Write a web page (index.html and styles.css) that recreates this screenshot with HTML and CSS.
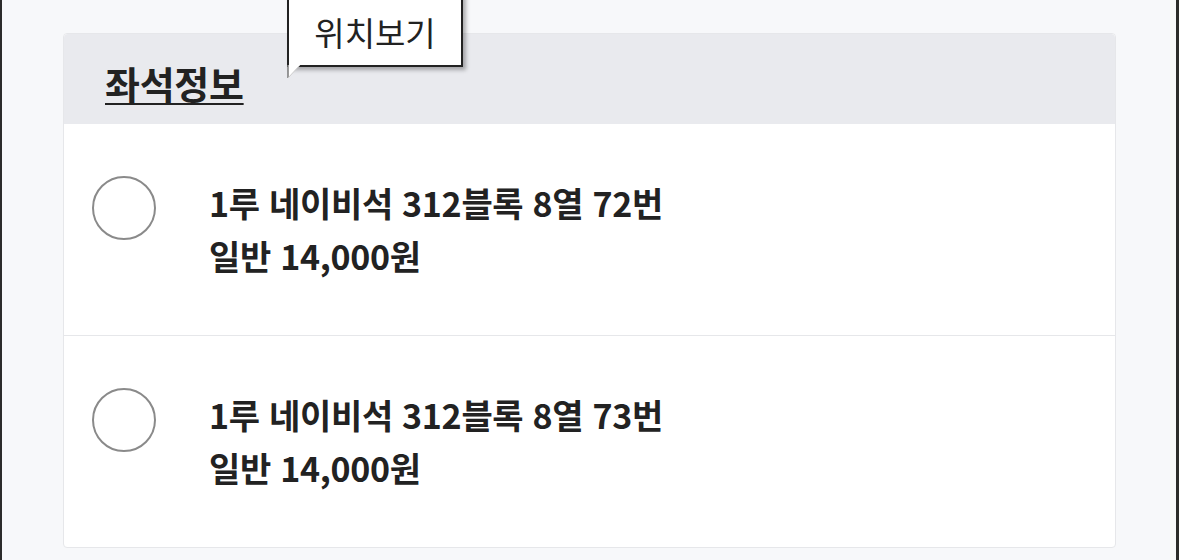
FILE: index.html
```html
<!DOCTYPE html>
<html lang="ko">
<head>
  <meta charset="UTF-8">
  <title>좌석정보</title>
  <link rel="stylesheet" href="styles.css">
</head>
<body>

  <div class="frame">
    <div class="seat-card">

      <!-- 위치보기 말풍선 -->
      <div class="tooltip">
        위치보기
        <svg class="tooltip-tail" width="16" height="15" viewBox="0 0 16 15">
          <path d="M1 0 L1 13 L13 0 Z" fill="#fff"/>
          <path d="M1 0 L1 13" stroke="#777" stroke-width="1.5"/>
          <path d="M1 13 L13 0" stroke="#ccc" stroke-width="1"/>
        </svg>
      </div>

      <div class="seat-header">
        <h2>좌석정보</h2>
      </div>

      <div class="seat-row">
        <span class="radio"></span>
        <div class="seat-text">
          <p>1루 네이비석 312블록 8열 72번</p>
          <p>일반 14,000원</p>
        </div>
      </div>

      <div class="seat-row">
        <span class="radio"></span>
        <div class="seat-text">
          <p>1루 네이비석 312블록 8열 73번</p>
          <p>일반 14,000원</p>
        </div>
      </div>

    </div>
  </div>

</body>
</html>
```

FILE: styles.css
```css
body {
  margin: 0;
  font-family: "Noto Sans CJK KR", "Noto Sans", sans-serif;
  color: #222;
}

.frame {
  background: #f7f8fa;
  border-left: 2px solid #2b2b2b;
  border-right: 3px solid #2b2b2b;
  height: 560px;
  box-sizing: border-box;
  padding: 33px 60px 0 61px;
  overflow: hidden;
}

.seat-card {
  position: relative;
  background: #fff;
  border: 1px solid #e6e7ea;
  border-radius: 4px;
}

.seat-header {
  background: #e9eaee;
  height: 90px;
  padding-left: 41px;
  border-radius: 4px 4px 0 0;
}

.seat-header h2 {
  margin: 0;
  padding-top: 24px;
  font-size: 38px;
  font-weight: 700;
  line-height: 50px;
  letter-spacing: -0.3px;
  text-decoration: underline;
  text-decoration-thickness: 2px;
  text-underline-offset: 4px;
}

/* 말풍선 */
.tooltip {
  position: absolute;
  left: 223px;
  top: -43px;
  width: 176px;
  height: 76px;
  box-sizing: border-box;
  padding-top: 14px;
  text-align: center;
  background: #fff;
  border: 2px solid #222;
  box-shadow: 3px 3px 4px rgba(0, 0, 0, 0.3);
  font-size: 33px;
  line-height: 50px;
  font-weight: 400;
  z-index: 2;
}

.tooltip-tail {
  position: absolute;
  left: -2px;
  bottom: -15px;
}

.seat-row {
  display: flex;
  align-items: flex-start;
  height: 211px;
  padding: 52px 0 0 28px;
  box-sizing: border-box;
}

.seat-row + .seat-row {
  border-top: 1px solid #e6e7ea;
  height: 212px;
}

.radio {
  width: 64px;
  height: 64px;
  box-sizing: border-box;
  border: 2px solid #8a8a8a;
  border-radius: 50%;
  flex-shrink: 0;
}

.seat-text {
  margin-left: 53px;
  margin-top: 0;
}

.seat-text p {
  margin: 0;
  font-size: 34px;
  font-weight: 700;
  line-height: 53px;
  letter-spacing: -0.3px;
}
```
